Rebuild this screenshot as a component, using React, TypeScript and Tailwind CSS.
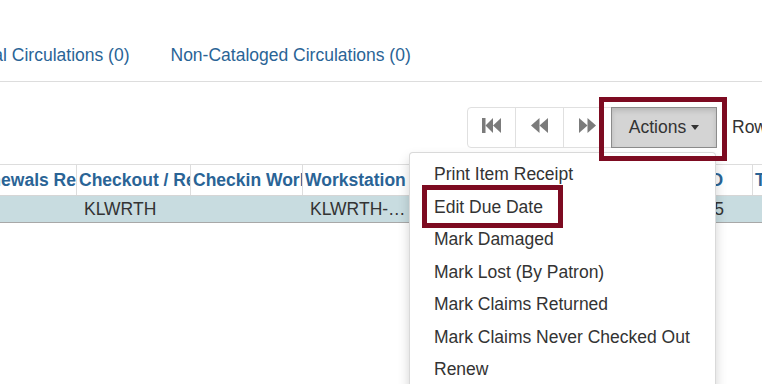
import React from 'react';

interface Column {
  width: number;
  head: string;
  cell: string;
  right?: boolean;
}

const columns: Column[] = [
  { width: 111, head: 'Renewals Remaining', cell: '' },
  { width: 114, head: 'Checkout / Renewal Library', cell: 'KLWRTH' },
  { width: 112, head: 'Checkin Workstation', cell: '' },
  { width: 113, head: 'Workstation', cell: 'KLWRTH-CIRC01' },
  { width: 113, head: 'Checkin Scan Date', cell: '' },
  { width: 126, head: 'Due Date', cell: '' },
  { width: 98, head: 'Copy ID', cell: '392145', right: true },
  { width: 150, head: 'Title', cell: '' },
];

const menuItems = [
  'Print Item Receipt',
  'Edit Due Date',
  'Mark Damaged',
  'Mark Lost (By Patron)',
  'Mark Claims Returned',
  'Mark Claims Never Checked Out',
  'Renew',
];

// glyphicon-style pager icons
const FastBackward = () => (
  <svg width="19" height="15" viewBox="0 0 19 15" className="mb-[4px]">
    <rect x="0" y="0" width="3.5" height="15" fill="#7b7b7b" />
    <polygon points="3.5,7.5 11,0 11,15" fill="#7b7b7b" />
    <polygon points="11,7.5 19,0 19,15" fill="#7b7b7b" />
  </svg>
);

const Backward = () => (
  <svg width="17" height="15" viewBox="0 0 17 15" className="mb-[4px]">
    <polygon points="0,7.5 8.5,0 8.5,15" fill="#7b7b7b" />
    <polygon points="8.5,7.5 17,0 17,15" fill="#7b7b7b" />
  </svg>
);

const Forward = () => (
  <svg width="17" height="15" viewBox="0 0 17 15" className="mb-[4px]">
    <polygon points="0,0 8.5,7.5 0,15" fill="#7b7b7b" />
    <polygon points="8.5,0 17,7.5 8.5,15" fill="#7b7b7b" />
  </svg>
);

export default function App() {
  return (
    <div className="relative w-[762px] h-[384px] overflow-hidden bg-white font-['Liberation_Sans',Arial,sans-serif] text-[17.5px] text-[#333]">
      {/* Tabs */}
      <div className="h-[82px] border-b border-[#ddd] pt-[45px] flex gap-[41px] whitespace-nowrap leading-[20px] text-[#2a6496]">
        <span className="ml-[-30px]">Total Circulations (0)</span>
        <span>Non-Cataloged Circulations (0)</span>
      </div>

      {/* Toolbar */}
      <div className="h-[82px] pt-[25px] pl-[467px] flex items-start whitespace-nowrap">
        <div className="flex h-[41px]">
          <button className="w-[49px] h-[41px] flex items-center justify-center bg-white border border-[#e0e0e0] rounded-l-[4px]">
            <FastBackward />
          </button>
          <button className="-ml-px w-[49px] h-[41px] flex items-center justify-center bg-white border border-[#e0e0e0]">
            <Backward />
          </button>
          <button className="-ml-px w-[49px] h-[41px] flex items-center justify-center bg-white border border-[#e0e0e0]">
            <Forward />
          </button>
          <div className="relative -ml-px">
            <button className="w-[106px] h-[41px] flex items-center justify-center bg-[#d4d4d4] border border-[#8c8c8c] shadow-[inset_0_3px_5px_rgba(0,0,0,0.125)] text-[#333]">
              Actions
              <span className="ml-[5px] inline-block w-0 h-0 border-t-[5px] border-x-[4.5px] border-x-transparent border-t-[#333]" />
            </button>
            <div className="absolute z-20 left-[-12px] right-[-10px] top-[-10px] bottom-[-13px] border-[5px] border-[#7d0b21] pointer-events-none" />
          </div>
        </div>
        <span className="ml-[15px] h-[41px] flex items-center">Rows 25</span>
      </div>

      {/* Grid */}
      <div className="ml-[-35px] flex flex-col w-max">
        <div className="flex h-[31px] border-t border-[#ddd] bg-white">
          {columns.map((c) => (
            <div
              key={c.head}
              style={{ width: c.width }}
              className="shrink-0 border-l border-[#ddd] px-[2px] flex items-center overflow-hidden whitespace-nowrap font-bold text-[#2a6496]"
            >
              {c.head}
            </div>
          ))}
        </div>
        <div className="flex h-[28px] bg-[#c8dce0] border-t border-[#d6d6d6] border-b border-b-[#a8a8a8]">
          {columns.map((c) => (
            <div
              key={c.head}
              style={{ width: c.width }}
              className={`shrink-0 flex items-center ${c.right ? 'justify-end pl-[4px] pr-[28px]' : 'px-[8px]'}`}
            >
              <span className="truncate">{c.cell}</span>
            </div>
          ))}
        </div>
      </div>

      {/* Actions dropdown */}
      <div className="absolute z-10 left-[409px] top-[152px] w-[307px] h-[260px] bg-white border border-[rgba(0,0,0,0.15)] rounded-[4px] shadow-[0_6px_12px_rgba(0,0,0,0.175)] pt-[5px]">
        {menuItems.map((item) => (
          <div key={item} className="relative h-[32.5px] pl-[24px] flex items-center whitespace-nowrap text-[#333]">
            {item}
            {item === 'Edit Due Date' && (
              <div className="absolute z-20 left-[12px] w-[141px] top-[-6px] h-[43px] border-[5px] border-[#7d0b21] pointer-events-none" />
            )}
          </div>
        ))}
      </div>
    </div>
  );
}
